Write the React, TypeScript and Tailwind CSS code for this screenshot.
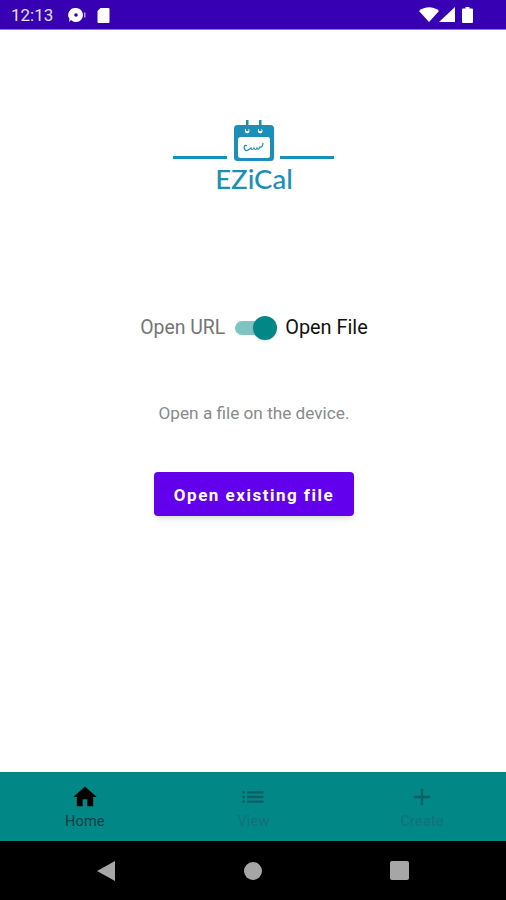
const StatusBar = () => (
  <div className="h-[30px] bg-[#3700b3] border-b border-[#8f7ad6] flex items-center justify-between pl-[11px] pr-[33px] shrink-0">
    <div className="flex items-center">
      <span className="text-[17px] leading-none pt-[1px] text-[#e4e0f5]">12:13</span>
      <svg width="18" height="16" viewBox="0 0 18 16" className="ml-[15px]">
        <path d="M8 1a7 7 0 1 1-5 12L1 15l.5-3A7 7 0 0 1 8 1Z" fill="#fff" />
        <circle cx="8" cy="8" r="1.8" fill="#3700b3" />
        <rect x="16" y="5.5" width="1.5" height="5" fill="#fff" opacity="0.6" />
      </svg>
      <svg width="13" height="16" viewBox="0 0 13 16" className="ml-[11px]">
        <path d="M3.5 1H11.5a1 1 0 0 1 1 1V15a1 1 0 0 1-1 1H1.5a1 1 0 0 1-1-1V4Z" fill="#fff" />
      </svg>
    </div>
    <div className="flex items-center">
      <svg width="20" height="15" viewBox="0 0 20 15">
        <path d="M0 4C5.5-1 14.5-1 20 4L10 15Z" fill="#fff" />
      </svg>
      <svg width="16" height="15" viewBox="0 0 16 15">
        <path d="M16 0V15H0Z" fill="#fff" />
      </svg>
      <svg width="11" height="16" viewBox="0 0 11 16" className="ml-[7px]">
        <path d="M3.5 0H7.5V1.5H10a1 1 0 0 1 1 1V15a1 1 0 0 1-1 1H1a1 1 0 0 1-1-1V2.5a1 1 0 0 1 1-1H3.5Z" fill="#fff" />
      </svg>
    </div>
  </div>
);

const Logo = () => (
  <div className="flex flex-col items-center">
    <svg width="162" height="44" viewBox="0 0 162 44" className="block">
      <rect x="0" y="37" width="54" height="3" fill="#1b8fb8" />
      <rect x="107" y="37" width="54" height="3" fill="#1b8fb8" />
      <rect x="61" y="6" width="40" height="36" rx="3.5" fill="#1b8fb8" />
      <rect x="65" y="18" width="32" height="21" rx="2.5" fill="#fff" />
      <rect x="73" y="1" width="2.5" height="11" fill="#1b8fb8" />
      <rect x="86" y="1" width="2.5" height="11" fill="#1b8fb8" />
      <circle cx="74.2" cy="12" r="2.4" fill="#fff" />
      <circle cx="87.2" cy="12" r="2.4" fill="#fff" />
      <rect x="73" y="8" width="2.5" height="4" fill="#1b8fb8" />
      <rect x="86" y="8" width="2.5" height="4" fill="#1b8fb8" />
      <path d="M74 27c-2-2-4 1-2 4 2 2 4-1 6-2 0 2 2 2 3 0 1 2 2 2 3 0 1 2 2 1 3-1 1 1 3-1 3-4" fill="none" stroke="#1b8fb8" strokeWidth="1.2" />
    </svg>
    <span className="font-['Lato',sans-serif] text-[27.5px] leading-[34px] -mt-[1px] font-medium text-[#1b8fb8]">EZiCal</span>
  </div>
);

const NavItem = ({ label, active, path }: { label: string; active?: boolean; path: string }) => (
  <div className="flex flex-col items-center pt-[11px] pl-[1px]">
    <svg width="28" height="28" viewBox="0 0 24 24" fill={active ? '#000' : '#0b5f66'}>
      <path d={path} />
    </svg>
    <span className={`text-[14.5px] leading-[18px] mt-[2px] tracking-[0.2px] ${active ? 'text-[#053f45]' : 'text-[#14707a]'}`}>{label}</span>
  </div>
);

export default function App() {
  return (
    <div className="h-[900px] w-full flex flex-col bg-white font-['Roboto',sans-serif]">
      <StatusBar />

      <main className="flex-1 flex flex-col items-center pt-[89px] pl-[2px]">
        <Logo />

        <div className="flex items-center mt-[118px] h-[28px] leading-none">
          <span className="text-[19.4px] text-[#757575]">Open URL</span>
          <div className="relative w-[30px] h-[14px] rounded-full bg-[#7fc3c2] ml-[10px] mr-[20px]">
            <div className="absolute -right-[12px] -top-[5px] w-[24px] h-[24px] rounded-full bg-[#018786] shadow-sm" />
          </div>
          <span className="text-[19.9px] text-[#111]">Open File</span>
        </div>

        <p className="mt-[59px] text-[17.2px] leading-[24px] text-[#8a8a8a]">Open a file on the device.</p>

        <button className="mt-[47px] w-[200px] h-[44px] pt-[3px] rounded-[4px] bg-[#6200ee] text-white text-[17px] font-bold tracking-[1.5px] shadow-md">
          Open existing file
        </button>
      </main>

      <nav className="h-[69px] bg-[#018786] grid grid-cols-3 shrink-0">
        <NavItem label="Home" active path="M10 20v-6h4v6h5v-8h3L12 3 2 12h3v8z" />
        <NavItem label="View" path="M3 13h2v-2H3v2zm0 4h2v-2H3v2zm0-8h2V7H3v2zm4 4h14v-2H7v2zm0 4h14v-2H7v2zM7 7v2h14V7H7z" />
        <NavItem label="Create" path="M19 13h-6v6h-2v-6H5v-2h6V5h2v6h6v2z" />
      </nav>

      <div className="h-[59px] bg-black flex items-center justify-between px-[97px] shrink-0">
        <svg width="18" height="20" viewBox="0 0 18 20"><path d="M18 0V20L0 10Z" fill="#a6a6a6" /></svg>
        <div className="w-[18px] h-[18px] rounded-full bg-[#a6a6a6]" />
        <div className="w-[19px] h-[19px] rounded-[2px] bg-[#a6a6a6]" />
      </div>
    </div>
  );
}
